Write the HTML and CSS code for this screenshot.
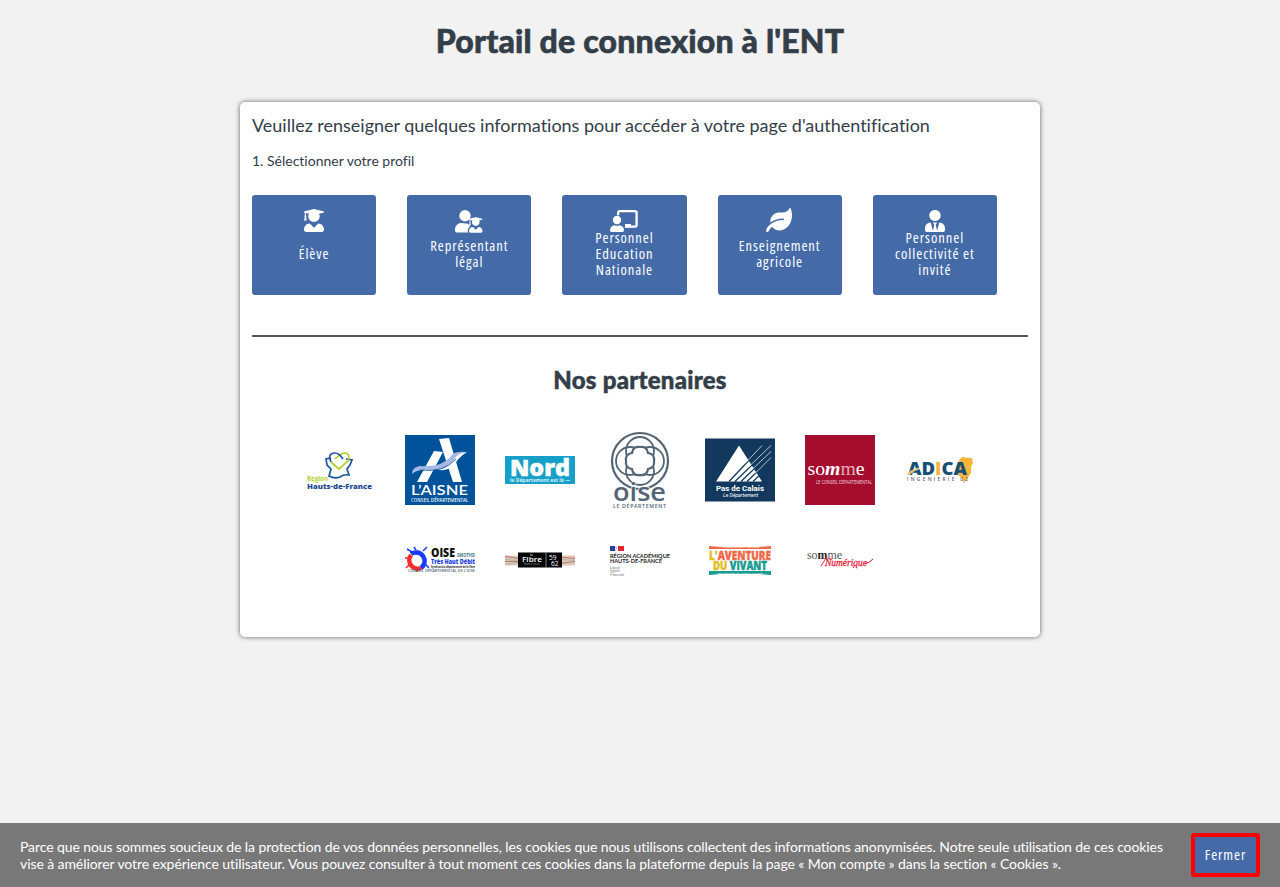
FILE: index.html
```html
<!DOCTYPE html>
<html lang="fr">
<head>
<meta charset="utf-8">
<title>Portail de connexion à l'ENT</title>
<link rel="stylesheet" href="styles.css">
</head>
<body>
<h1 class="title">Portail de connexion à l'ENT</h1>
<main class="card">
  <p class="intro">Veuillez renseigner quelques informations pour accéder à votre page d'authentification</p>
  <p class="step">1. Sélectionner votre profil</p>
  <div class="profiles">
    <button class="profile"><span class="icon"><svg width="20" height="23" viewBox="0 0 448 512"><path id="graduate" d="M319.4 320.6L224 416l-95.4-95.4C57.1 323.7 0 382.2 0 454.4v9.6c0 26.5 21.5 48 48 48h352c26.5 0 48-21.5 48-48v-9.6c0-72.2-57.1-130.7-128.6-133.8zM13.6 79.8l6.4 1.5v58.4c-7 4.2-12 11.5-12 20.3 0 8.4 4.6 15.4 11.1 19.7L3.5 242c-1.7 6.9 2.1 14 7.6 14h41.8c5.5 0 9.3-7.1 7.6-14l-15.6-62.3C51.4 175.4 56 168.4 56 160c0-8.8-5-16.1-12-20.3V87.1l66 15.9c-8.6 17.2-14 36.4-14 57 0 70.7 57.3 128 128 128s128-57.3 128-128c0-20.6-5.3-39.8-14-57l96.3-23.2c18.2-4.4 18.2-27.1 0-31.5l-190.4-46c-13-3.1-26.7-3.1-39.7 0L13.6 48.2c-18.1 4.4-18.1 27.2 0 31.6z"/></svg></span><span class="label">Élève</span></button>
    <button class="profile"><span class="icon low"><svg width="28" height="23" viewBox="0 0 28 23"><circle cx="10" cy="5.7" r="5.7"/><path d="M6.3 13C2.6 13.2 0 16 0 19.5V20.5Q0 22.4 2 22.4H13.2Q12.5 21.5 12.7 20.3Q13 17.5 15.3 16.2L13.8 14.5Q12 13 6.3 13Z"/><svg x="14" y="7.2" width="13.5" height="15.6" viewBox="0 0 448 512"><use href="#graduate"/></svg></svg></span><span class="label">Représentant<br>légal</span></button>
    <button class="profile"><span class="icon low"><svg width="28" height="22" viewBox="0 0 28 22"><path d="M8.2 5.2V2.5Q8.2 1.2 9.5 1.2H25Q26.6 1.2 26.6 2.8V15Q26.6 16.6 25 16.6H15" fill="none" stroke="#fff" stroke-width="2.3"/><path d="M15 17.5V14H21V17.5Z"/><circle cx="7" cy="10" r="4.2"/><path d="M0 20.3C0 17 2 15.4 4.6 15.2Q7 16.3 9.4 15.2C12 15.4 14 17 14 20.3Q14 22 12.5 22H1.5Q0 22 0 20.3Z"/></svg></span><span class="label">Personnel<br>Education<br>Nationale</span></button>
    <button class="profile"><span class="icon leaf"><svg width="26" height="24" viewBox="0 0 576 512" preserveAspectRatio="none"><path d="M546.2 9.7c-5.6-12.5-21.6-13-28.3-1.2C486.9 62.4 431.4 96 368 96h-80C182 96 96 182 96 288c0 7 .8 13.7 1.5 20.5C161.3 262.8 253.4 224 384 224c8.8 0 16 7.2 16 16s-7.2 16-16 16C132.6 256 26 410.1 2.4 468c-6.6 16.3 1.2 34.9 17.5 41.6 16.4 6.8 35-1.1 41.8-17.3 1.5-3.6 20.9-47.9 71.9-90.6 32.4 43.9 94 85.8 174.9 77.2C465.5 467.5 576 326.7 576 154.3c0-50.2-10.8-102.2-29.8-144.6z"/></svg></span><span class="label">Enseignement<br>agricole</span></button>
    <button class="profile"><span class="icon low"><svg width="20" height="22" viewBox="0 0 448 512" preserveAspectRatio="none"><path d="M224 256c70.7 0 128-57.3 128-128S294.7 0 224 0 96 57.3 96 128s57.3 128 128 128zm95.8 32.6L272 480l-32-136 32-56h-96l32 56-32 136-47.8-191.4C56.9 292 0 350.3 0 422.4V464c0 26.5 21.5 48 48 48h352c26.5 0 48-21.5 48-48v-41.6c0-72.1-56.9-130.4-128.2-133.8z"/></svg></span><span class="label">Personnel<br>collectivité et<br>invité</span></button>
  </div>
  <hr class="rule">
  <h2 class="subtitle">Nos partenaires</h2>
  <div class="partners">
    <svg class="logo" width="70" height="70" viewBox="0 0 70 70">
      <g fill="none" stroke-width="1.7"><path d="M26 23L21 24L22 30L26 34L24 41Q30 44 35 42Q39 39 44 40L42 34L45 30L47 25L41 24" stroke="#1e56a0"/><path d="M26 27L34 34L43 26Q46 18 39 18Q35 19 30 24" stroke="#b1d22e"/><path d="M26 27Q22 18 30 18Q34 18 38 24" stroke="#1e56a0"/></g>
      <text x="2" y="45.5" textLength="21" lengthAdjust="spacingAndGlyphs" font-size="6.2" font-weight="700" fill="#b1d22e">Région</text><text x="2" y="53.5" textLength="65" lengthAdjust="spacingAndGlyphs" font-size="7.5" font-weight="800" fill="#254b8c">Hauts-de-France</text>
    </svg>
    <svg class="logo" width="70" height="70" viewBox="0 0 70 70">
      <rect width="70" height="70" fill="#00529b"/><path d="M34 4L44 3L57 47H48Z" fill="#fff"/><path d="M29 16L38 17L22 47H12Z" fill="#fff"/><path d="M7 39Q7 32 15 31Q37 33 47 20Q50 16 62 17Q53 19 49 25Q41 36 25 35Q13 34 7 39Z" fill="#a6b9e5"/><path d="M20 35Q41 37 49 25Q52 18 62 17Q54 22 50 29Q43 36 35 35Q27 34 18 39Z" fill="#fff"/><path d="M15 35Q39 38 51 24" fill="none" stroke="#00529b" stroke-width=".8"/>
      <text class="lato" x="6" y="59.5" textLength="57" lengthAdjust="spacingAndGlyphs" font-size="14" font-weight="600" fill="#fff">L’AISNE</text><text class="narrow" x="6" y="66.5" textLength="57" lengthAdjust="spacingAndGlyphs" font-size="5.5" fill="#fff">CONSEIL DÉPARTEMENTAL</text>
    </svg>
    <svg class="logo" width="70" height="28" viewBox="0 0 70 28"><rect width="70" height="28" fill="#169fc8"/><text x="5" y="19.5" textLength="60" lengthAdjust="spacingAndGlyphs" font-size="22" font-weight="800" fill="#fff" stroke="#fff" stroke-width=".5">Nord</text><text x="5" y="25.5" textLength="60" lengthAdjust="spacingAndGlyphs" font-size="4.6" font-weight="700" fill="#d9f2f8">le Département est là —</text></svg>
    <svg class="logo" width="70" height="80" viewBox="0 0 70 80"><g fill="none" stroke="#536575" stroke-width="2.2"><circle cx="35" cy="31" r="28"/><g stroke-width="1.8"><circle cx="35" cy="21" r="14"/><circle cx="25" cy="31" r="14"/><circle cx="45" cy="31" r="14"/><circle cx="35" cy="41" r="14"/></g><path d="M27 23Q28 16 35 17Q42 16 43 23Q50 24 49 31Q50 38 43 39Q42 46 35 45Q28 46 27 39Q20 38 21 31Q20 24 27 23Z" fill="#fff"/></g><text x="8" y="71" textLength="53" lengthAdjust="spacingAndGlyphs" font-size="25" font-weight="600" fill="#536575" stroke="#fff" stroke-width="1" paint-order="stroke">oise</text><text x="8" y="77.5" textLength="53" font-size="5.2" font-weight="600" fill="#536575">LE DÉPARTEMENT</text></svg>
    <svg class="logo" width="70" height="63" viewBox="0 0 70 63"><rect width="70" height="63" fill="#12395d"/><path d="M34 7L57 43H11Z" fill="#fff"/><path d="M24 43L57 8M30 43L67 7M36 43L67 13M42 43L67 19M48 43L67 25" stroke="#12395d" stroke-width="1.3"/><path d="M40 25L57 7M43 29L66 7M46 32L66 13M50 35L66 19" stroke="#fff" stroke-width=".7"/><text class="roboto" x="11" y="52" textLength="48" lengthAdjust="spacingAndGlyphs" font-size="8" font-weight="700" fill="#fff">Pas de Calais</text><text class="roboto" x="18" y="58.5" textLength="35" lengthAdjust="spacingAndGlyphs" font-size="5" font-style="italic" fill="#fff">Le Département</text></svg>
    <svg class="logo serif" width="70" height="70" viewBox="0 0 70 70"><rect width="70" height="70" fill="#a50d2f"/><text x="2.5" y="39.5" textLength="57" lengthAdjust="spacingAndGlyphs" font-size="19" fill="#fff">so<tspan font-weight="700" font-style="italic">m</tspan><tspan fill="#e5a9b7">m</tspan>e</text><text class="sans" x="11" y="49" textLength="56" lengthAdjust="spacingAndGlyphs" font-size="4.4" fill="#f3d5dc">LE CONSEIL DÉPARTEMENTAL</text></svg>
    <svg class="logo" width="70" height="30" viewBox="0 0 70 30"><path d="M54 5L57 2L63 3L67 3L68 8L66 12L66 18L62 24L59 28L57 23L53 20Z" fill="#f9b43b"/><text x="3" y="20" textLength="59" lengthAdjust="spacingAndGlyphs" font-size="17" font-weight="800" fill="#154f76">AD<tspan fill="#f9b43b">I</tspan>CA</text><path d="M1 20Q9 12 17 13Q9 15 4 20Z" fill="#f9b43b" stroke="#fff" stroke-width=".5"/><text x="2" y="26" textLength="61" font-size="4.8" font-weight="600" fill="#596571">INGENIERIE 02</text></svg>
    <svg class="logo" width="70" height="28" viewBox="0 0 70 28"><path d="M6 8A8.5 8.5 0 1 1 16 22" fill="none" stroke="#173cff" stroke-width="4.5"/><path d="M6 9A8.5 8.5 0 0 0 16 22" fill="none" stroke="#f22b2b" stroke-width="4.5"/><path d="M7 6L2 3M11 4L9 1M18 5L22 1M20 18L24 22" stroke="#173cff" stroke-width="1.5"/><path d="M5 12H0M5 18L1 22M12 22V26" stroke="#f22b2b" stroke-width="1.5"/><text x="26" y="11" textLength="24" lengthAdjust="spacingAndGlyphs" font-size="11.5" font-weight="800" fill="#111">OISE</text><text x="52" y="11" textLength="18" lengthAdjust="spacingAndGlyphs" font-size="4.4" font-weight="700" fill="#38768a">SMOTHD</text><text x="26" y="18" textLength="44" lengthAdjust="spacingAndGlyphs" font-size="6.8" font-weight="800" fill="#203de8">Très Haut Débit</text><text x="26" y="21.8" textLength="44" lengthAdjust="spacingAndGlyphs" font-size="2.8" font-weight="700" fill="#222">Syndicat du département de la fibre</text><text x="3" y="26.4" textLength="67" lengthAdjust="spacingAndGlyphs" font-size="3.5" font-weight="600" fill="#45677a">CONSEIL DÉPARTEMENTAL DE L’OISE</text></svg>
    <svg class="logo" width="70" height="15" viewBox="0 0 70 15"><path fill="#dfc9b9" d="M0 3H70V13H0Z"/><path d="M0 4L14 6L20 3M50 4L70 6M0 9H14M55 11L70 9" stroke="#b7756c" fill="none"/><path d="M0 7L14 8M56 7L70 8M0 12L14 10" stroke="#b0b4aa"/><path fill="#000" d="M13 0H57V15H13Z"/><path d="M41 0V15" stroke="#bbb" stroke-width=".7"/><text x="17" y="9.7" textLength="20" lengthAdjust="spacingAndGlyphs" font-size="7.5" font-weight="600" fill="#fff">Fibre</text><text x="25" y="3.5" font-size="2.6" fill="#fff">La</text><text x="19" y="12.8" textLength="16" font-size="2.6" fill="#aaa">Numérique</text><text x="44" y="7" font-size="6.5" fill="#fff">59</text><text x="46" y="13" font-size="6.5" fill="#fff">62</text></svg>
    <svg class="logo" width="70" height="32" viewBox="0 0 70 32"><path fill="#2640a0" d="M5 2H10V7H5Z"/><path fill="#e22534" d="M13 2H19V7H13Z"/><path d="M10 3L12 4L10 7" fill="none" stroke="#8290bd" stroke-width=".6"/><g font-weight="700" fill="#222"><text class="lato" x="5" y="13.7" textLength="60" lengthAdjust="spacingAndGlyphs" font-size="6.4">RÉGION ACADÉMIQUE</text><text class="lato" x="5" y="19.3" textLength="52" lengthAdjust="spacingAndGlyphs" font-size="6.4">HAUTS-DE-FRANCE</text></g><g font-size="3.3" font-style="italic" fill="#666"><text x="5" y="24.5">Liberté</text><text x="5" y="28">Égalité</text><text x="5" y="31.5">Fraternité</text></g></svg>
    <svg class="logo" width="70" height="30" viewBox="0 0 70 30"><path d="M4 1L16 2H54L66 1V4H4Z" fill="#ef6947"/><text x="18" y="3.4" textLength="36" lengthAdjust="spacingAndGlyphs" font-size="2.4" fill="#fff">ENSEIGNEMENT AGRICOLE</text><text x="4" y="14.8" textLength="62" lengthAdjust="spacingAndGlyphs" font-size="12.5" font-weight="800" fill="#ef6947" stroke="#ef6947" stroke-width=".4"><tspan fill="#dfbd24" stroke="#dfbd24">L'</tspan>AVENTURE</text><text x="8" y="25" textLength="54" lengthAdjust="spacingAndGlyphs" font-size="12" font-weight="800" fill="#199b91" stroke="#199b91" stroke-width=".4"><tspan fill="#dfbd24" stroke="#dfbd24">DU</tspan> VIVANT</text><path d="M4 26H66V30L54 29H16L4 30Z" fill="#199b91"/><text x="12" y="28.5" textLength="46" lengthAdjust="spacingAndGlyphs" font-size="2.4" fill="#fff">LES MÉTIERS GRANDEUR NATURE</text></svg>
    <svg class="logo serif" width="70" height="24" viewBox="0 0 70 24"><text x="2" y="11" textLength="35" lengthAdjust="spacingAndGlyphs" font-size="12" fill="#555">so<tspan font-weight="700" fill="#222">m</tspan>me</text><text x="20" y="17.5" textLength="42" lengthAdjust="spacingAndGlyphs" font-size="11" font-style="italic" fill="#e41e3e" stroke="#e41e3e" stroke-width=".3">Numérique</text><path d="M16 18Q20 12 22 8M50 17L48 20M60 16Q64 15 68 11" stroke="#e41e3e" fill="none"/></svg>
  </div>
</main>
<footer class="cookies"><p class="notice">Parce que nous sommes soucieux de la protection de vos données personnelles, les cookies que nous utilisons collectent des informations anonymisées. Notre seule utilisation de ces cookies vise à améliorer votre expérience utilisateur. Vous pouvez consulter à tout moment ces cookies dans la plateforme depuis la page « Mon compte » dans la section « Cookies ».</p><button class="close">Fermer</button></footer>
</body>
</html>
```
FILE: styles.css
```css
* { box-sizing: border-box; }
body { margin: 0; height: 887px; display: flex; flex-direction: column; align-items: center; background: #f2f2f2; color: #333e49; font-family: Lato, sans-serif; font-variant-ligatures: no-common-ligatures; overflow: hidden; }
.title { margin: 0; padding-top: 20px; height: 102px; font-size: 32px; line-height: 42px; font-weight: 900; letter-spacing: .19px; -webkit-text-stroke: .6px #333e49; }
.card { width: 800px; height: 535px; padding: 12px; background: #fff; border-radius: 5px; box-shadow: 0 0 5px rgba(0,0,0,.6); }
.intro { margin: -1px 0 0; font-size: 18px; line-height: 24px; letter-spacing: -.01px; white-space: nowrap; }
.step { margin: 14px 0 0; font-size: 14px; line-height: 20px; }
.profiles { display: flex; gap: 31.04px; margin-top: 24px; }
.profile { width: 124.16px; height: 100px; padding: 0; border: 0; border-radius: 3px; background: #446ba8; color: #fff; display: flex; flex-direction: column; align-items: center; font: 14.5px/16px "Open Sans", sans-serif; font-stretch: 80%; letter-spacing: .95px; }
.icon { height: 35px; padding-top: 14px; }
.icon.low { padding-top: 15px; }
.icon.leaf { padding-top: 13px; margin-left: -2px; }
.icon svg { display: block; fill: #fff; overflow: visible; }
.label { height: 48px; display: flex; align-items: center; text-align: center; }
.rule { margin: 40px 0 0; height: 2px; border: 0; background: #555960; }
.subtitle { margin: 28px 0 0; font-size: 24px; line-height: 30px; font-weight: 900; letter-spacing: .25px; -webkit-text-stroke: .5px #333e49; text-align: center; }
.partners { display: flex; flex-wrap: wrap; justify-content: center; align-items: center; align-content: flex-start; column-gap: 30px; row-gap: 0; width: 700px; margin: 30px auto 0; }
.logo { height: 90px; width: 70px; font-family: "Open Sans", sans-serif; }
.serif { font-family: "Liberation Serif", serif; }
.sans { font-family: "Open Sans", sans-serif; }
.roboto { font-family: Roboto, sans-serif; }
.lato { font-family: Lato, sans-serif; }
.narrow { font-stretch: 80%; }
.cookies { width: 100%; height: 64px; margin-top: auto; padding: 0 20px; display: flex; align-items: center; justify-content: space-between; background: #787878; color: #fff; }
.notice { width: 1152px; margin: 0; font-size: 14px; line-height: 17px; letter-spacing: -.087px; }
.close { width: 69px; height: 44px; padding: 0; border: 4px solid #f00; border-radius: 3px; background: #446ba8; color: #fff; font: 14.5px/16px "Open Sans", sans-serif; font-stretch: 80%; letter-spacing: .9px; }
```
